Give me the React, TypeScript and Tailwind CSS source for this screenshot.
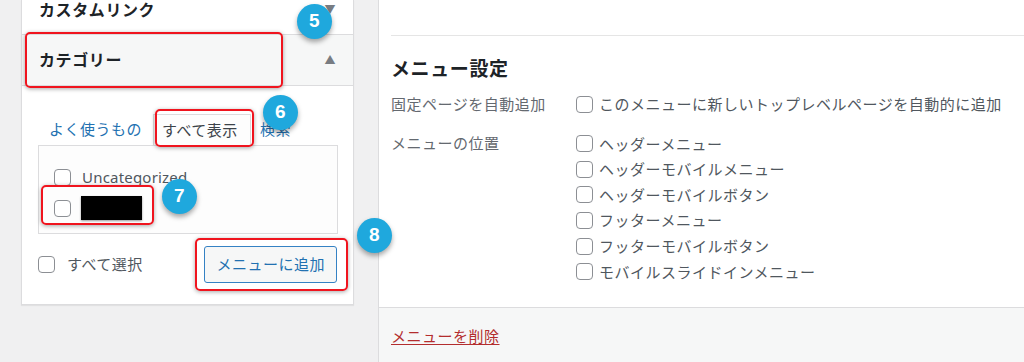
import React from 'react';

const Box = () => (
  <span className="inline-block w-[17px] h-[17px] shrink-0 rounded-[4px] border border-[#8c8f94] bg-white" />
);

const Badge = ({ n, x, y }: { n: number; x: number; y: number }) => (
  <div
    className="absolute w-[35px] h-[35px] rounded-full bg-[#1fa8dd] text-white text-[19px] font-bold flex items-center justify-center shadow-[0_3px_5px_rgba(0,0,0,0.35)] font-['Liberation_Sans',sans-serif]"
    style={{ left: x - 17, top: y - 17 }}
  >
    {n}
  </div>
);

const Mark = ({ x, y, w, h }: { x: number; y: number; w: number; h: number }) => (
  <div
    className="absolute rounded-[5px] border-2 border-[#f0141e] shadow-[0_1px_4px_rgba(0,0,0,0.35)]"
    style={{ left: x, top: y, width: w, height: h }}
  />
);

const locations = [
  'ヘッダーメニュー',
  'ヘッダーモバイルメニュー',
  'ヘッダーモバイルボタン',
  'フッターメニュー',
  'フッターモバイルボタン',
  'モバイルスライドインメニュー',
];

export default function App() {
  return (
    <div className="relative w-[1024px] h-[362px] overflow-hidden bg-[#f0f0f1] flex font-['Noto_Sans','Noto_Sans_CJK_JP',sans-serif] text-[15px] tracking-[0.5px] text-[#50575e]">
      {/* left: add items */}
      <div className="ml-[21px] w-[333px] h-[305px] bg-white border-x border-b border-[#dcdcde] shadow-[0_1px_1px_rgba(0,0,0,0.06)] flex flex-col">
        <div className="h-[35px] shrink-0 border-b border-[#dcdcde] flex items-start justify-between pl-[17px] pr-[17px]">
          <span className="leading-[20px] text-[16px] font-bold text-[#1d2327] tracking-[0.6px]">カスタムリンク</span>
          <span className="text-[11px] leading-[20px] text-[#787c82]">▼</span>
        </div>
        <div className="h-[51px] shrink-0 bg-[#f6f7f7] border-b border-[#dcdcde] flex items-center justify-between pl-[17px] pr-[17px]">
          <span className="text-[16px] font-bold text-[#1d2327] tracking-[0.6px]">カテゴリー</span>
          <span className="text-[11px] text-[#787c82]">▲</span>
        </div>
        <div className="px-[16px] pt-[27px] flex flex-col">
          <div className="flex items-end h-[32px]">
            <span className="px-[11px] pb-[5px] text-[#2271b1]">よく使うもの</span>
            <span className="pl-[8px] pr-[12px] h-[32px] flex items-center border-x border-t border-[#dcdcde] bg-[#fdfdfd] -mb-px text-[#3c434a]">すべて表示</span>
            <span className="px-[9px] pb-[5px] text-[#2271b1]">検索</span>
          </div>
          <div className="w-[300px] h-[89px] border border-[#dcdcde] bg-[#fdfdfd] pl-[15px] pt-[22px] flex flex-col gap-[10px]">
            <div className="flex items-center gap-[11px] h-[18px]">
              <Box />
              <span className="text-[#50575e] tracking-[0.2px]">Uncategorized</span>
            </div>
            <div className="flex items-center gap-[10px] h-[24px]">
              <Box />
              <span className="w-[61px] h-[24px] bg-black shadow-[0_1px_2px_rgba(0,0,0,0.4)]" />
            </div>
          </div>
          <div className="flex items-center justify-between mt-[12px] h-[37px]">
            <div className="flex items-center gap-[12px]">
              <Box />
              <span className="text-[#50575e]">すべて選択</span>
            </div>
            <button className="h-[37px] px-[11px] rounded-[3px] border border-[#3582c4] bg-[#f6f7f7] text-[#2271b1]">
              メニューに追加
            </button>
          </div>
        </div>
      </div>

      {/* right: menu settings */}
      <div className="ml-[24px] flex-1 h-full border-l border-[#dcdcde] flex flex-col">
        <div className="bg-white h-[307px] pl-[12px] flex flex-col">
          <div className="h-[36px] border-b border-[#e5e5e5]" />
          <h3 className="mt-[21px] text-[19px] leading-[24px] font-bold text-[#1d2327] tracking-[0.6px]">メニュー設定</h3>
          <div className="mt-[11px] flex items-center h-[24px]">
            <span className="w-[185px] text-[#646970]">固定ページを自動追加</span>
            <div className="flex items-center gap-[6px]">
              <Box />
              <span>このメニューに新しいトップレベルページを自動的に追加</span>
            </div>
          </div>
          <div className="mt-[15px] flex">
            <span className="w-[185px] text-[#646970] leading-[25.6px]">メニューの位置</span>
            <div className="flex flex-col">
              {locations.map(l => (
                <div key={l} className="flex items-center gap-[6px] h-[25.6px]">
                  <Box />
                  <span>{l}</span>
                </div>
              ))}
            </div>
          </div>
        </div>
        <div className="flex-1 bg-[#f6f7f7] border-t border-[#dcdcde] pl-[12px] pt-[17px]">
          <a className="text-[#b32d2e] underline underline-offset-2">メニューを削除</a>
        </div>
      </div>

      {/* annotations */}
      <Mark x={25} y={32} w={258} h={56} />
      <Mark x={155} y={109} w={99} h={38} />
      <Mark x={41} y={185} w={113} h={40} />
      <Mark x={195} y={238} w={153} h={53} />
      <Badge n={5} x={314} y={21} />
      <Badge n={6} x={280} y={112} />
      <Badge n={7} x={179} y={196} />
      <Badge n={8} x={374} y={235} />
    </div>
  );
}
